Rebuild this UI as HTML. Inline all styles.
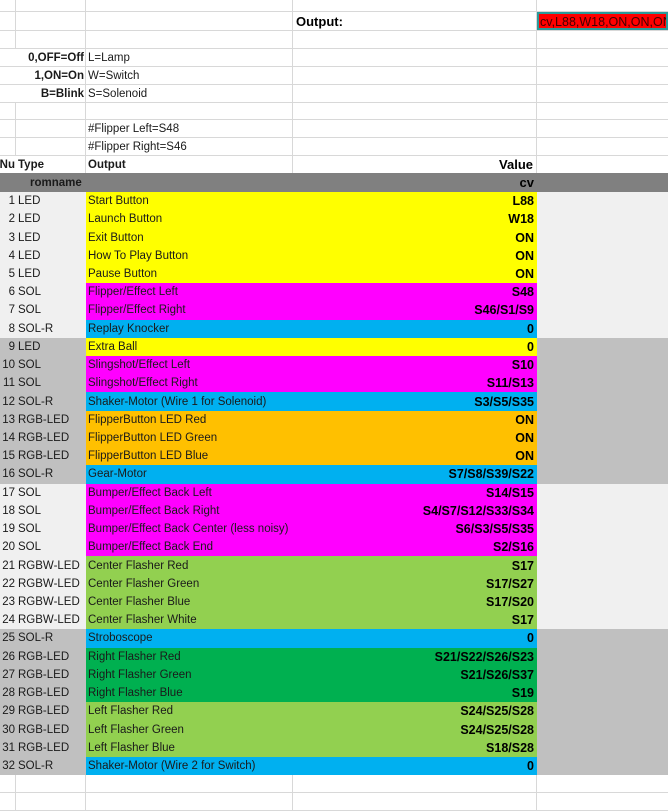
<!DOCTYPE html>
<html><head><meta charset="utf-8"><style>
*{margin:0;padding:0;box-sizing:border-box}
body{width:668px;height:800px;overflow:hidden;background:#fff;font-family:"Liberation Sans",Arial,sans-serif;font-size:11.5px;color:#1a1a1a;position:relative}
.r{position:absolute;left:0;width:668px;display:flex;border-bottom:1px solid #d8d8d8}
.r>div{height:100%;display:flex;align-items:center;white-space:nowrap;overflow:hidden}
.a{width:16px;border-right:1px solid #d8d8d8;justify-content:flex-end;padding-right:1px}
.b{width:70px;border-right:1px solid #d8d8d8;padding-left:2px}
.c{width:207px;border-right:1px solid #d8d8d8;padding-left:2px}
.d{width:244px;border-right:1px solid #d8d8d8;justify-content:flex-end;padding-right:3px;font-weight:bold;font-size:12.5px;color:#000}
.e{flex:1}
.bold{font-weight:bold}
.dr .a,.dr .b{border-right:none}
.dr .c{border-right:none}
.dr .d{border-right:none}
.dr{border-bottom:none}
</style></head><body>
<div class="r" style="top:0;height:12px"><div class="a"></div><div class="b"></div><div class="c"></div><div class="d"></div><div class="e"></div></div>
<div class="r" style="top:12px;height:19px"><div class="a"></div><div class="b"></div><div class="c"></div><div class="d" style="justify-content:flex-start;padding-left:3px;font-size:13px">Output:</div><div class="e" style="background:#f00;border:2px solid #2a9a9a;color:#400;font-size:12.5px;padding-left:1px;padding-top:1px">cv,L88,W18,ON,ON,ON,S48</div></div>
<div class="r" style="top:31px;height:18px"><div class="a"></div><div class="b"></div><div class="c"></div><div class="d"></div><div class="e"></div></div>
<div class="r" style="top:49px;height:18px"><div class="a" style="width:86px;padding-right:1px;font-weight:bold">0,OFF=Off</div><div class="c">L=Lamp</div><div class="d"></div><div class="e"></div></div>
<div class="r" style="top:67px;height:18px"><div class="a" style="width:86px;padding-right:1px;font-weight:bold">1,ON=On</div><div class="c">W=Switch</div><div class="d"></div><div class="e"></div></div>
<div class="r" style="top:85px;height:18px"><div class="a" style="width:86px;padding-right:1px;font-weight:bold">B=Blink</div><div class="c">S=Solenoid</div><div class="d"></div><div class="e"></div></div>
<div class="r" style="top:103px;height:17px"><div class="a"></div><div class="b"></div><div class="c"></div><div class="d"></div><div class="e"></div></div>
<div class="r" style="top:120px;height:18px"><div class="a"></div><div class="b"></div><div class="c">#Flipper Left=S48</div><div class="d"></div><div class="e"></div></div>
<div class="r" style="top:138px;height:18px"><div class="a"></div><div class="b"></div><div class="c">#Flipper Right=S46</div><div class="d"></div><div class="e"></div></div>
<div class="r" style="top:156px;height:17px;border-bottom:none"><div class="a bold" style="border-right:none">Nu</div><div class="b bold">Type</div><div class="c bold">Output</div><div class="d" style="font-size:13px">Value</div><div class="e"></div></div>
<div class="r dr" style="top:173px;height:19px;background:#808080"><div class="a"></div><div class="b bold" style="padding-left:14px">romname</div><div class="c"></div><div class="d" style="font-size:13px">cv</div><div class="e"></div></div>
<div id="rows"></div>
<script>
var Y='#ffff00',M='#ff00ff',B='#00b0f0',O='#ffc000',LG='#92d050',G='#00b050';
var d=[
[1,'LED','Start Button','L88',Y],[2,'LED','Launch Button','W18',Y],[3,'LED','Exit Button','ON',Y],[4,'LED','How To Play Button','ON',Y],[5,'LED','Pause Button','ON',Y],
[6,'SOL','Flipper/Effect Left','S48',M],[7,'SOL','Flipper/Effect Right','S46/S1/S9',M],[8,'SOL-R','Replay Knocker','0',B],
[9,'LED','Extra Ball','0',Y],[10,'SOL','Slingshot/Effect Left','S10',M],[11,'SOL','Slingshot/Effect Right','S11/S13',M],[12,'SOL-R','Shaker-Motor (Wire 1 for Solenoid)','S3/S5/S35',B],
[13,'RGB-LED','FlipperButton LED Red','ON',O],[14,'RGB-LED','FlipperButton LED Green','ON',O],[15,'RGB-LED','FlipperButton LED Blue','ON',O],[16,'SOL-R','Gear-Motor','S7/S8/S39/S22',B],
[17,'SOL','Bumper/Effect Back Left','S14/S15',M],[18,'SOL','Bumper/Effect Back Right','S4/S7/S12/S33/S34',M],[19,'SOL','Bumper/Effect Back Center (less noisy)','S6/S3/S5/S35',M],[20,'SOL','Bumper/Effect Back End','S2/S16',M],
[21,'RGBW-LED','Center Flasher Red','S17',LG],[22,'RGBW-LED','Center Flasher Green','S17/S27',LG],[23,'RGBW-LED','Center Flasher Blue','S17/S20',LG],[24,'RGBW-LED','Center Flasher White','S17',LG],
[25,'SOL-R','Stroboscope','0',B],[26,'RGB-LED','Right Flasher Red','S21/S22/S26/S23',G],[27,'RGB-LED','Right Flasher Green','S21/S26/S37',G],[28,'RGB-LED','Right Flasher Blue','S19',G],
[29,'RGB-LED','Left Flasher Red','S24/S25/S28',LG],[30,'RGB-LED','Left Flasher Green','S24/S25/S28',LG],[31,'RGB-LED','Left Flasher Blue','S18/S28',LG],[32,'SOL-R','Shaker-Motor (Wire 2 for Switch)','0',B]];
var h='';
d.forEach(function(r,i){var top=192+i*18.22;var g=Math.floor(i/8)%2?'#c0c0c0':'#f0f0f0';
h+='<div class="r dr" style="top:'+top+'px;height:18.3px;background:'+g+'"><div class="a">'+r[0]+'</div><div class="b">'+r[1]+'</div><div class="c" style="background:'+r[4]+'">'+r[2]+'</div><div class="d" style="background:'+r[4]+'">'+r[3]+'</div><div class="e"></div></div>';});
var t=192+32*18.22;
h+='<div class="r" style="top:'+t+'px;height:18px"><div class="a"></div><div class="b"></div><div class="c"></div><div class="d"></div><div class="e"></div></div>';
h+='<div class="r" style="top:'+(t+18)+'px;height:18px"><div class="a"></div><div class="b"></div><div class="c"></div><div class="d"></div><div class="e"></div></div>';
document.getElementById('rows').outerHTML=h;
</script>
</body></html>
